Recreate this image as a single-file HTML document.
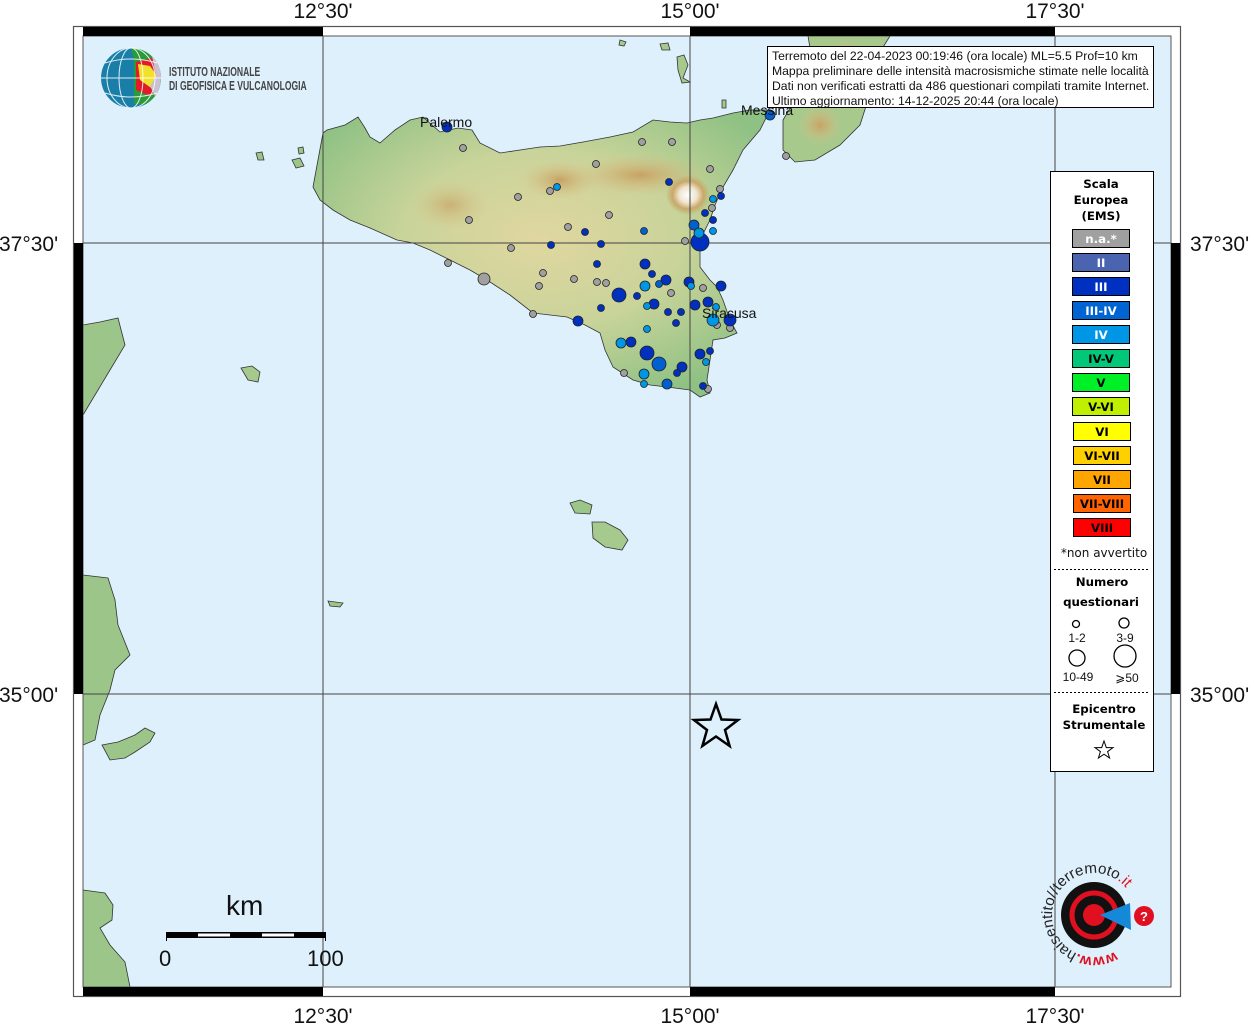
<!DOCTYPE html>
<html><head><meta charset="utf-8"><style>
html,body{margin:0;padding:0;background:#fff;}
svg{display:block;}
text{font-family:"Liberation Sans",sans-serif;}
.lg{font-family:"DejaVu Sans",sans-serif;font-weight:bold;font-size:11.8px;text-anchor:middle;}
</style></head><body>
<svg width="1254" height="1024" viewBox="0 0 1254 1024" xmlns="http://www.w3.org/2000/svg">
<defs>
<radialGradient id="land" cx="0.5" cy="0.45" r="0.6">
<stop offset="0" stop-color="#e0d6a0"/><stop offset="0.5" stop-color="#c9d49a"/><stop offset="1" stop-color="#8fc184"/>
</radialGradient>
<radialGradient id="etna" cx="0.5" cy="0.5" r="0.5">
<stop offset="0" stop-color="#ffffff"/><stop offset="0.4" stop-color="#f0e6d0"/><stop offset="0.7" stop-color="#c9a86a"/><stop offset="1" stop-color="#c9a86a" stop-opacity="0"/>
</radialGradient>
<radialGradient id="mnt" cx="0.5" cy="0.5" r="0.5">
<stop offset="0" stop-color="#c8a264"/><stop offset="1" stop-color="#d8c48a" stop-opacity="0"/>
</radialGradient>
<path id="arc" d="M1115,951.4 A42,42 0 1 1 1128.4,890.9"/>
</defs>
<rect x="83" y="36" width="1088" height="951" fill="#dff0fd"/>
<g stroke="#333" stroke-width="0.8">
<path fill="url(#land)" d="M313,187 L323,133 L327,130 L345,125 L358,117 L365,128 L370,137 L380,143 L395,130 L410,120 L423,117 L440,132 L458,128 L472,130 L480,143 L500,153 L520,150 L540,147 L560,146 L583,142 L610,137 L633,132 L653,120 L670,122 L687,123 L700,120 L713,118 L733,113 L750,110 L770,110 L760,130 L743,150 L733,170 L723,187 L715,205 L710,220 L700,240 L700,255 L700,267 L710,280 L717,287 L723,300 L730,320 L737,333 L725,338 L713,340 L710,360 L707,380 L710,393 L700,397 L690,390 L667,387 L650,385 L633,380 L613,367 L605,350 L600,333 L585,325 L567,317 L550,315 L533,313 L510,295 L487,280 L470,270 L450,260 L430,250 L413,243 L397,240 L370,228 L350,220 L333,210 L320,200 Z"/>
<path fill="#a8c98c" d="M808,36 L890,36 L875,60 L868,100 L860,125 L840,145 L815,160 L795,162 L783,150 L783,120 L795,100 L805,80 L812,60 Z"/>
<path fill="#9cc58a" d="M83,325 L100,322 L118,318 L125,345 L110,370 L95,395 L83,415 Z"/>
<path fill="#9cc58a" d="M83,575 L108,578 L115,600 L118,625 L130,655 L115,670 L110,690 L100,715 L95,740 L83,745 Z"/>
<path fill="#9cc58a" d="M102,745 L118,742 L135,735 L145,728 L155,733 L150,742 L135,752 L125,758 L110,760 Z"/>
<path fill="#9cc58a" d="M83,890 L105,893 L113,905 L112,920 L100,928 L110,945 L125,962 L130,987 L83,987 Z"/>
<path fill="#9cc58a" d="M570,503 L580,500 L592,505 L590,514 L575,513 Z"/>
<path fill="#a6c98e" d="M592,522 L605,522 L620,530 L628,540 L622,550 L605,547 L593,538 Z"/>
<path fill="#a6c98e" d="M241,368 L252,366 L260,372 L258,382 L248,380 Z"/>
<path fill="#9cc58a" d="M328,601 L343,603 L340,607 L330,606 Z"/>
<path fill="#9cc58a" d="M256,153 L262,152 L264,160 L258,160 Z"/>
<path fill="#9cc58a" d="M292,160 L300,158 L304,166 L296,168 Z"/>
<path fill="#9cc58a" d="M298,148 L303,147 L304,153 L299,154 Z"/>
<path fill="#a6c98e" d="M660,44 L668,43 L670,50 L662,50 Z"/>
<path fill="#a6c98e" d="M677,57 L684,55 L688,65 L683,78 L690,82 L682,83 L678,70 Z"/>
<path fill="#a6c98e" d="M620,40 L626,42 L624,46 L619,45 Z"/>
<path fill="#a6c98e" d="M722,100 L726,100 L726,108 L722,108 Z"/>
</g>
<ellipse cx="640" cy="175" rx="70" ry="22" fill="url(#mnt)"/>
<ellipse cx="560" cy="180" rx="40" ry="20" fill="url(#mnt)"/>
<ellipse cx="450" cy="205" rx="40" ry="25" fill="url(#mnt)" opacity="0.7"/>
<ellipse cx="688" cy="195" rx="22" ry="20" fill="url(#etna)"/>
<ellipse cx="820" cy="125" rx="22" ry="20" fill="url(#mnt)"/>
<ellipse cx="845" cy="55" rx="20" ry="15" fill="url(#mnt)"/>
<g stroke="#444" stroke-width="1">
<line x1="323" y1="36" x2="323" y2="987"/><line x1="690" y1="36" x2="690" y2="987"/><line x1="1055" y1="36" x2="1055" y2="987"/>
<line x1="83" y1="243" x2="1171" y2="243"/><line x1="83" y1="694" x2="1171" y2="694"/>
</g>
<g stroke="#222" stroke-width="0.8">
<g fill="#a0a0a0">
<circle cx="463" cy="148" r="3.5"/><circle cx="642" cy="142" r="3.5"/><circle cx="672" cy="142" r="3.5"/><circle cx="596" cy="164" r="3.5"/><circle cx="710" cy="169" r="3.5"/><circle cx="550" cy="191" r="3.5"/><circle cx="518" cy="197" r="3.5"/><circle cx="720" cy="189" r="3.5"/><circle cx="712" cy="208" r="3.5"/><circle cx="609" cy="215" r="3.5"/><circle cx="469" cy="220" r="3.5"/><circle cx="568" cy="227" r="3.5"/><circle cx="685" cy="241" r="3.5"/><circle cx="511" cy="248" r="3.5"/><circle cx="448" cy="263" r="3.5"/><circle cx="543" cy="273" r="3.5"/><circle cx="484" cy="279" r="6"/><circle cx="574" cy="279" r="3.5"/><circle cx="597" cy="282" r="3.5"/><circle cx="606" cy="283" r="3.5"/><circle cx="539" cy="286" r="3.5"/><circle cx="703" cy="288" r="3.5"/><circle cx="671" cy="293" r="3.5"/><circle cx="533" cy="314" r="3.5"/><circle cx="717" cy="325" r="3.5"/><circle cx="730" cy="328" r="3.5"/><circle cx="624" cy="373" r="3.5"/><circle cx="708" cy="389" r="3.5"/><circle cx="786" cy="156" r="3.5"/>
</g>
<g fill="#0030c0">
<circle cx="447" cy="127" r="5"/><circle cx="669" cy="182" r="3.5"/><circle cx="721" cy="196" r="3.5"/><circle cx="705" cy="213" r="3.5"/><circle cx="713" cy="220" r="3.5"/><circle cx="585" cy="232" r="3.5"/><circle cx="700" cy="242" r="9"/><circle cx="551" cy="245" r="3.5"/><circle cx="601" cy="244" r="3.5"/><circle cx="645" cy="264" r="5"/><circle cx="597" cy="264" r="3.5"/><circle cx="652" cy="274" r="3.5"/><circle cx="666" cy="280" r="5"/><circle cx="689" cy="282" r="5"/><circle cx="721" cy="286" r="5"/><circle cx="619" cy="295" r="7"/><circle cx="637" cy="296" r="3.5"/><circle cx="654" cy="304" r="5"/><circle cx="695" cy="305" r="5"/><circle cx="708" cy="302" r="5"/><circle cx="601" cy="308" r="3.5"/><circle cx="668" cy="312" r="3.5"/><circle cx="681" cy="312" r="3.5"/><circle cx="730" cy="320" r="6"/><circle cx="578" cy="321" r="5"/><circle cx="676" cy="323" r="3.5"/><circle cx="631" cy="342" r="5"/><circle cx="647" cy="353" r="7"/><circle cx="700" cy="354" r="5"/><circle cx="710" cy="351" r="3.5"/><circle cx="682" cy="367" r="5"/><circle cx="677" cy="373" r="3.5"/><circle cx="703" cy="386" r="3.5"/>
</g>
<g fill="#0060d0">
<circle cx="694" cy="225" r="5"/><circle cx="644" cy="231" r="3.5"/><circle cx="659" cy="284" r="3.5"/><circle cx="659" cy="364" r="7"/><circle cx="667" cy="384" r="5"/><circle cx="770" cy="115" r="5"/>
</g>
<g fill="#0096e6">
<circle cx="557" cy="187" r="3.5"/><circle cx="713" cy="199" r="3.5"/><circle cx="699" cy="233" r="5"/><circle cx="713" cy="231" r="3.5"/><circle cx="645" cy="286" r="5"/><circle cx="691" cy="286" r="3.5"/><circle cx="647" cy="306" r="3.5"/><circle cx="716" cy="307" r="3.5"/><circle cx="713" cy="320" r="6"/><circle cx="647" cy="329" r="3.5"/><circle cx="621" cy="343" r="5"/><circle cx="706" cy="362" r="3.5"/><circle cx="644" cy="374" r="5"/><circle cx="644" cy="384" r="3.5"/>
</g>
</g>
<g font-size="14" fill="#111">
<text x="420" y="127">Palermo</text><text x="741" y="115">Messina</text><text x="702" y="318">Siracusa</text>
</g>
<path d="M716,704 L721.5,719.5 L738,720 L725,730 L729.6,746 L716,736.5 L702.4,746 L707,730 L694,720 L710.5,719.5 Z" fill="none" stroke="#000" stroke-width="2.5"/>
<rect x="73.5" y="26.5" width="1107" height="970" fill="none" stroke="#555" stroke-width="1.2"/>
<rect x="83" y="36" width="1088" height="951" fill="none" stroke="#555" stroke-width="1"/>
<g fill="#000">
<rect x="83" y="27" width="240" height="9"/><rect x="690" y="27" width="365" height="9"/>
<rect x="83" y="987" width="240" height="9"/><rect x="690" y="987" width="365" height="9"/>
<rect x="74" y="243" width="9" height="451"/><rect x="1171" y="243" width="9" height="451"/>
</g>
<g font-size="21" fill="#111" text-anchor="middle">
<text x="323" y="18">12°30'</text><text x="690" y="18">15°00'</text><text x="1055" y="18">17°30'</text>
<text x="323" y="1023">12°30'</text><text x="690" y="1023">15°00'</text><text x="1055" y="1023">17°30'</text>
</g>
<g font-size="21" fill="#111">
<text x="-1" y="251">37°30'</text><text x="-1" y="702">35°00'</text>
<text x="1190" y="251">37°30'</text><text x="1190" y="702">35°00'</text>
</g>
<text x="226" y="915" font-size="28" fill="#111">km</text>
<rect x="166" y="932" width="160" height="6" fill="#000"/>
<rect x="198" y="933.5" width="32" height="3" fill="#fff"/><rect x="262" y="933.5" width="32" height="3" fill="#fff"/>
<g stroke="#000" stroke-width="1"><line x1="166.5" y1="932" x2="166.5" y2="941"/><line x1="325.5" y1="932" x2="325.5" y2="941"/></g>
<text x="159" y="966" font-size="22" fill="#111">0</text><text x="307" y="966" font-size="22" fill="#111">100</text>
<rect x="767.5" y="46.5" width="386" height="61" fill="#fff" stroke="#000"/>
<g font-size="12.2" fill="#111">
<text x="772" y="60">Terremoto del 22-04-2023 00:19:46 (ora locale) ML=5.5 Prof=10 km</text>
<text x="772" y="75">Mappa preliminare delle intensità macrosismiche stimate nelle località</text>
<text x="772" y="90">Dati non verificati estratti da 486 questionari compilati tramite Internet.</text>
<text x="772" y="105">Ultimo aggiornamento: 14-12-2025 20:44 (ora locale)</text>
</g>
<rect x="1050.5" y="171.5" width="103" height="600" fill="#fff" stroke="#000"/>
<text class="lg" x="1101" y="188">Scala</text><text class="lg" x="1101" y="204">Europea</text><text class="lg" x="1101" y="220">(EMS)</text>
<g stroke="#000" stroke-width="1">
<rect x="1072.5" y="229.5" width="57" height="18" fill="#a0a0a0"/>
<rect x="1072.5" y="253.5" width="57" height="18" fill="#4a64b0"/>
<rect x="1072.5" y="277.5" width="57" height="18" fill="#0030c0"/>
<rect x="1072.5" y="301.5" width="57" height="18" fill="#0064d2"/>
<rect x="1072.5" y="325.5" width="57" height="18" fill="#0096e6"/>
<rect x="1072.5" y="349.5" width="57" height="18" fill="#00c878"/>
<rect x="1072.5" y="373.5" width="57" height="18" fill="#00f028"/>
<rect x="1072.5" y="397.5" width="57" height="18" fill="#c0f000"/>
<rect x="1073.5" y="422.5" width="57" height="18" fill="#ffff00"/>
<rect x="1073.5" y="446.5" width="57" height="18" fill="#ffd000"/>
<rect x="1073.5" y="470.5" width="57" height="18" fill="#ffa500"/>
<rect x="1073.5" y="494.5" width="57" height="18" fill="#ff6400"/>
<rect x="1073.5" y="518.5" width="57" height="18" fill="#ff0000"/>
</g>
<g fill="#fff">
<text class="lg" x="1101" y="243">n.a.*</text><text class="lg" x="1101" y="267">II</text><text class="lg" x="1101" y="291">III</text><text class="lg" x="1101" y="315">III-IV</text><text class="lg" x="1101" y="339">IV</text>
</g>
<g fill="#000">
<text class="lg" x="1101" y="363">IV-V</text><text class="lg" x="1101" y="387">V</text><text class="lg" x="1101" y="411">V-VI</text><text class="lg" x="1102" y="436">VI</text><text class="lg" x="1102" y="460">VI-VII</text><text class="lg" x="1102" y="484">VII</text><text class="lg" x="1102" y="508">VII-VIII</text><text class="lg" x="1102" y="532">VIII</text>
</g>
<text x="1104" y="557" font-size="12" text-anchor="middle" fill="#111" style="font-family:'DejaVu Sans',sans-serif">*non avvertito</text>
<line x1="1054" y1="569.5" x2="1150" y2="569.5" stroke="#000" stroke-dasharray="2,2"/>
<text class="lg" x="1102" y="586">Numero</text><text class="lg" x="1101" y="606">questionari</text>
<g fill="none" stroke="#000" stroke-width="1.3"><circle cx="1076" cy="624" r="3.5"/><circle cx="1124" cy="623" r="5"/><circle cx="1077" cy="658" r="8"/><circle cx="1125" cy="656" r="11"/></g>
<g font-size="12" fill="#111" text-anchor="middle" style="font-family:'DejaVu Sans',sans-serif">
<text x="1077" y="642">1-2</text><text x="1125" y="642">3-9</text><text x="1078" y="681">10-49</text><text x="1127" y="682">⩾50</text>
</g>
<line x1="1054" y1="692.5" x2="1150" y2="692.5" stroke="#000" stroke-dasharray="2,2"/>
<text class="lg" x="1104" y="713">Epicentro</text><text class="lg" x="1104" y="729">Strumentale</text>
<path d="M1104,741 L1106.3,747.6 L1113,747.6 L1107.6,751.6 L1109.6,758 L1104,754.2 L1098.4,758 L1100.4,751.6 L1095,747.6 L1101.7,747.6 Z" fill="none" stroke="#000" stroke-width="1"/>
<circle cx="131" cy="78" r="30" fill="#1a7fa8"/>
<path d="M131,48 A30,30 0 0 1 161,78 A30,30 0 0 1 146,104 L134,104 L134,60 Z" fill="#2a9a3a"/>
<path d="M136,62 L152,58 L158,70 L160,84 L150,96 L136,90 Z" fill="#e01c2a"/>
<path d="M138,64 L150,66 L160,80 L154,90 L140,80 Z" fill="#f2e12a"/>
<path d="M152,56 A30,30 0 0 1 161,78 A30,30 0 0 1 155,96 L150,86 L156,76 Z" fill="#c9c0d0"/>
<g fill="none" stroke="#fff" stroke-width="1" opacity="0.85">
<ellipse cx="131" cy="78" rx="12" ry="30"/><ellipse cx="131" cy="78" rx="24" ry="30"/><line x1="101" y1="78" x2="161" y2="78"/><path d="M105,63 Q131,55 157,63"/><path d="M105,93 Q131,101 157,93"/>
</g>
<g fill="#444" font-size="13" font-weight="bold">
<text x="169" y="76" transform="translate(169,0) scale(0.66,1) translate(-169,0)">ISTITUTO NAZIONALE</text>
<text x="169" y="90" transform="translate(169,0) scale(0.66,1) translate(-169,0)">DI GEOFISICA E VULCANOLOGIA</text>
</g>
<circle cx="1094" cy="915" r="33" fill="#111"/>
<circle cx="1094" cy="915" r="22" fill="none" stroke="#e01020" stroke-width="5"/>
<circle cx="1094" cy="915" r="11" fill="#e01020"/>
<path d="M1100,915 L1130,903 L1131,930 Z" fill="#1688d8"/>
<circle cx="1144" cy="916" r="10" fill="#e01020"/>
<text x="1140" y="921" font-size="13" fill="#fff" font-weight="bold">?</text>
<text font-size="15" fill="#222"><textPath href="#arc" textLength="190" lengthAdjust="spacingAndGlyphs"><tspan fill="#e01020" font-weight="bold">www.</tspan>haisentito//terremoto<tspan fill="#e01020">.it</tspan></textPath></text>
</svg>
</body></html>
